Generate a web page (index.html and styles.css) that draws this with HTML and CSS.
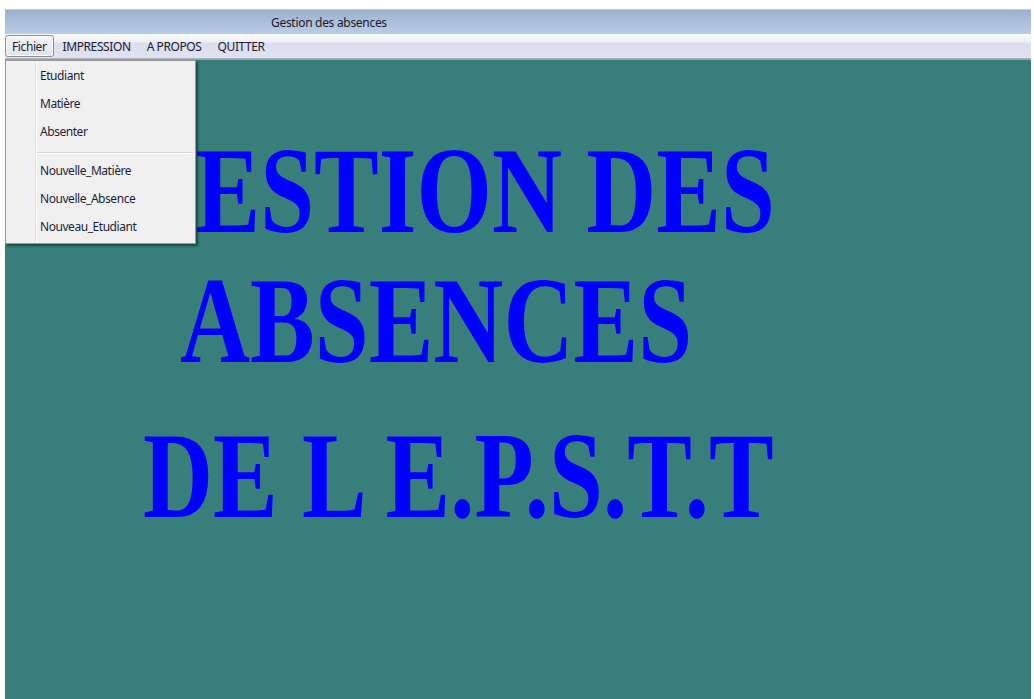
FILE: index.html
```html
<!DOCTYPE html>
<html lang="fr">
<head>
<meta charset="utf-8">
<title>Gestion des absences</title>
<link rel="stylesheet" href="styles.css">
</head>
<body>
<div class="window">
  <div class="titlebar"><span class="title">Gestion des absences</span></div>
  <div class="menubar">
    <div class="menu-item active">Fichier</div>
    <div class="menu-item">IMPRESSION</div>
    <div class="menu-item">A PROPOS</div>
    <div class="menu-item">QUITTER</div>
  </div>
  <div class="client">
    <div class="banner">
      <div class="line l1"><span class="txt">GESTION DES</span></div>
      <div class="line l2"><span class="txt">ABSENCES</span></div>
      <div class="line l3"><span class="txt">DE L E.P.S.T.T</span></div>
    </div>
  </div>
  <div class="dropdown">
    <div class="dd-item">Etudiant</div>
    <div class="dd-item">Matière</div>
    <div class="dd-item">Absenter</div>
    <div class="dd-sep"></div>
    <div class="dd-item">Nouvelle_Matière</div>
    <div class="dd-item">Nouvelle_Absence</div>
    <div class="dd-item">Nouveau_Etudiant</div>
  </div>
</div>
</body>
</html>
```
FILE: styles.css
```css
html, body {
  margin: 0;
  padding: 0;
  background: #ffffff;
  overflow: hidden;
}

body {
  font-family: "Noto Sans", "DejaVu Sans", sans-serif;
  font-size: 12px;
  color: #202030;
}

.window {
  position: relative;
  margin: 9px 3px 0 5px;
  height: 690px;
  display: flex;
  flex-direction: column;
}

.titlebar {
  height: 25px;
  border-top: 1px solid #c3cbd6;
  background: linear-gradient(#9cb1ce, #bacde7);
  display: flex;
  align-items: center;
  box-sizing: border-box;
  padding-left: 266px;
}

.title {
  color: #1a1a2a;
  letter-spacing: -0.3px;
}

.menubar {
  height: 25px;
  box-sizing: border-box;
  background: linear-gradient(#fbfcfe 0, #eef0f8 8px, #dcdeed 9px, #e0e2f1 23px);
  border-bottom: 1px solid #aeb3c0;
  display: flex;
  align-items: flex-end;
  gap: 2px;
  padding-bottom: 1px;
}

.menu-item {
  height: 22px;
  line-height: 21px;
  padding: 0 6px;
  box-sizing: border-box;
  letter-spacing: -0.4px;
  border: 1px solid transparent;
  border-radius: 3px;
}

.menu-item.active {
  border-color: #8c8e94;
  background: linear-gradient(#f3f3f5, #e3e4ea);
  box-shadow: inset 0 0 0 1px #ffffff;
}

.client {
  flex: 1;
  background: #387f7b;
  border-top: 1px solid #8aa5b0;
  overflow: hidden;
}

.banner {
  font-family: "Liberation Serif", "Times New Roman", serif;
  font-weight: bold;
  font-size: 122px;
  color: #0000ff;
}

.line {
  height: 122px;
  line-height: 122px;
  white-space: nowrap;
}

.txt {
  display: inline-block;
  transform: scaleX(0.795);
  transform-origin: 0 0;
}

.l1 { margin-top: 70px; padding-left: 115px; }
.l2 { margin-top: 8px; padding-left: 175px; }
.l3 { margin-top: 33px; padding-left: 138px; }

.dropdown {
  position: absolute;
  left: 0;
  top: 51px;
  width: 191px;
  box-sizing: border-box;
  background: #f0f0f0;
  border: 1px solid #979797;
  padding: 1px 2px 2px 1px;
  box-shadow: 2px 2px 2px rgba(0, 0, 0, 0.45);
  background-image: linear-gradient(90deg, transparent 29px, #e2e3e3 29px, #e2e3e3 30px, #ffffff 30px, #ffffff 31px, transparent 31px);
  z-index: 2;
}

.dd-item {
  height: 28px;
  line-height: 28px;
  padding-left: 33px;
  letter-spacing: -0.45px;
  color: #1e1e38;
}

.dd-sep {
  height: 11px;
  position: relative;
}

.dd-sep::after {
  content: "";
  position: absolute;
  left: 30px;
  right: 0;
  top: 6px;
  height: 1px;
  background: #d7d7d7;
  border-bottom: 1px solid #ffffff;
}
```
